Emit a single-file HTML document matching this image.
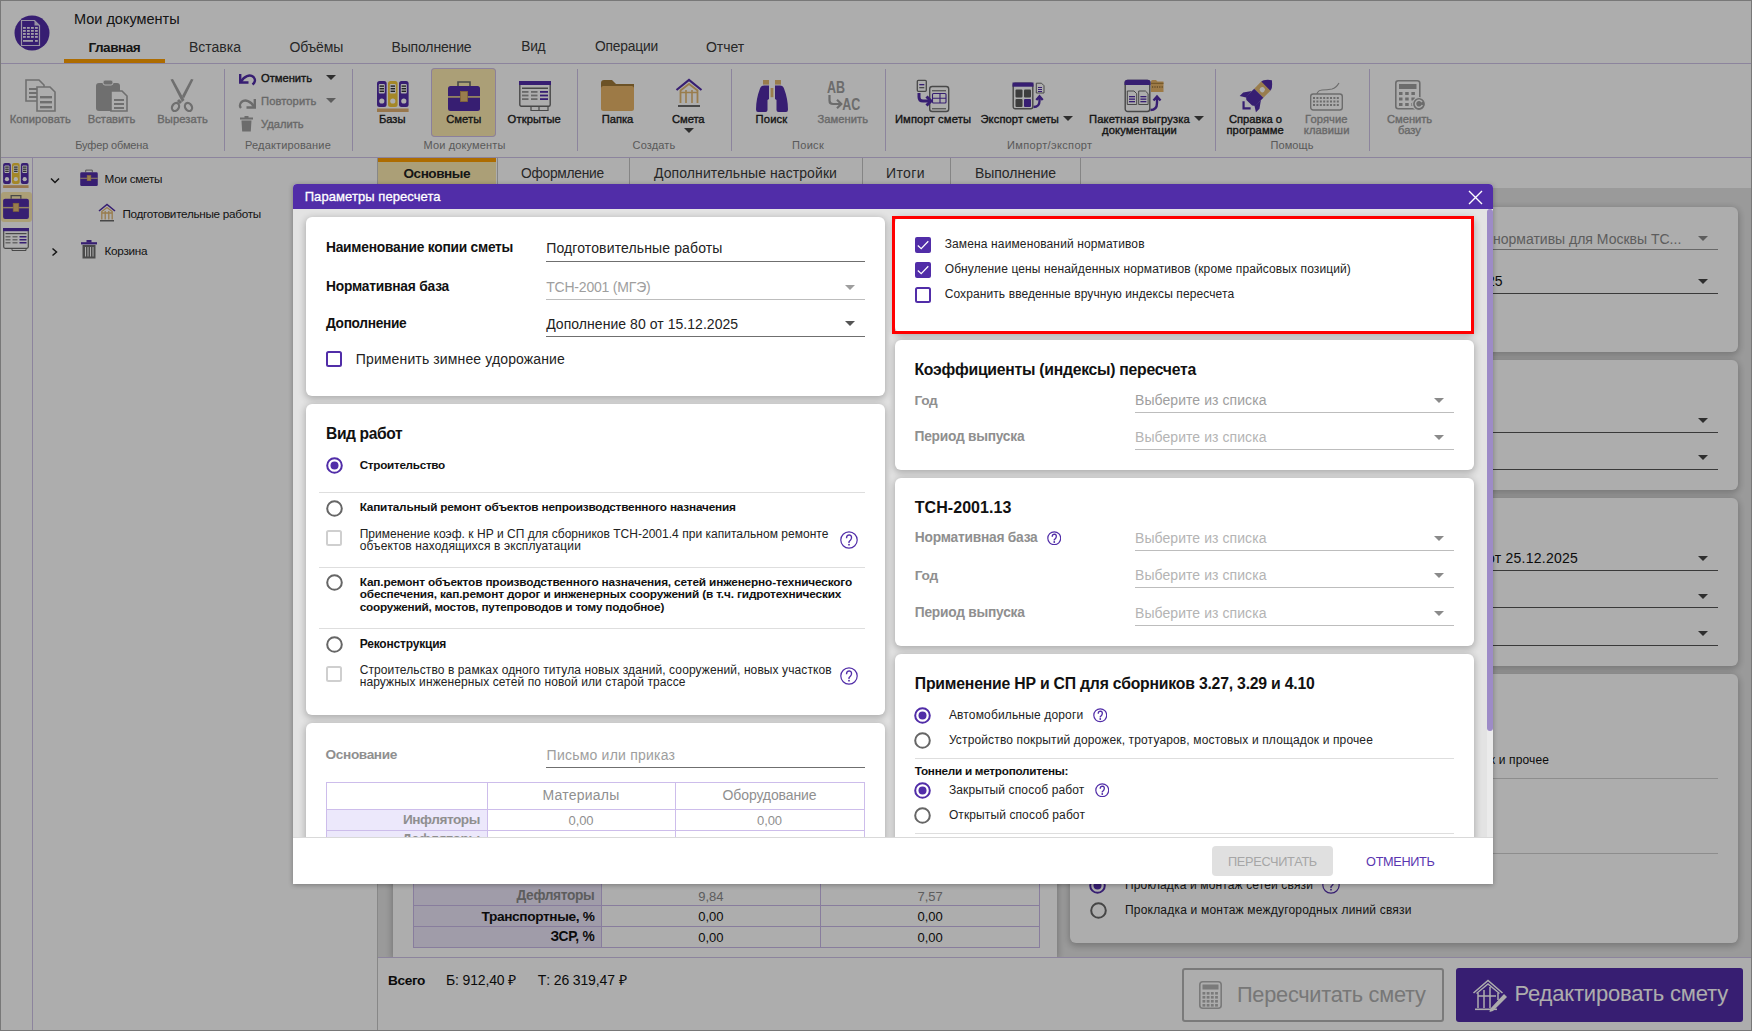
<!DOCTYPE html>
<html><head><meta charset='utf-8'><style>
html,body{margin:0;padding:0;width:1752px;height:1031px;overflow:hidden;background:#fff;font-family:"Liberation Sans",sans-serif;color:#212121}
.r{position:absolute;display:block;box-sizing:border-box}
.t{position:absolute;white-space:pre;line-height:1}
</style></head><body>
<svg class="r" style="left:14px;top:15px;" width="36" height="36" viewBox="0 0 36 36"><circle cx="18" cy="18" r="17.5" fill="#512da8"/><path d="M7.5 5.5 h13 l5 5 v20 h-18 z" fill="none" stroke="#e0d8f0" stroke-width="1.2"/><path d="M20.5 5.5 v5 h5" fill="#e0d8f0"/><rect x="9" y="12" width="2.8" height="1.8" fill="#f0ecf8"/><rect x="13" y="12" width="2.8" height="1.8" fill="#f0ecf8"/><rect x="17" y="12" width="2.8" height="1.8" fill="#f0ecf8"/><rect x="21" y="12" width="2.8" height="1.8" fill="#f0ecf8"/><rect x="9" y="15" width="2.8" height="1.8" fill="#f0ecf8"/><rect x="13" y="15" width="2.8" height="1.8" fill="#f0ecf8"/><rect x="17" y="15" width="2.8" height="1.8" fill="#f0ecf8"/><rect x="21" y="15" width="2.8" height="1.8" fill="#f0ecf8"/><rect x="9" y="18" width="2.8" height="1.8" fill="#f0ecf8"/><rect x="13" y="18" width="2.8" height="1.8" fill="#f0ecf8"/><rect x="17" y="18" width="2.8" height="1.8" fill="#f0ecf8"/><rect x="21" y="18" width="2.8" height="1.8" fill="#f0ecf8"/><rect x="9" y="21" width="2.8" height="1.8" fill="#f0ecf8"/><rect x="13" y="21" width="2.8" height="1.8" fill="#f0ecf8"/><rect x="17" y="21" width="2.8" height="1.8" fill="#f0ecf8"/><rect x="21" y="21" width="2.8" height="1.8" fill="#f0ecf8"/><rect x="9" y="25" width="10" height="1.8" fill="#f0ecf8"/><rect x="21" y="25" width="2.8" height="1.8" fill="#f0ecf8"/></svg>
<div class="t" style="left:74.0px;top:11.53px;font-size:14.5px;letter-spacing:-0.004px;">Мои документы</div>
<div class="t" style="left:88.4px;top:40.52px;font-size:13.56px;font-weight:700;letter-spacing:-0.451px;">Главная</div>
<div class="t" style="left:189.0px;top:40.15px;font-size:14px;color:#3a3a3a;letter-spacing:-0.007px;">Вставка</div>
<div class="t" style="left:289.5px;top:40.15px;font-size:14px;color:#3a3a3a;letter-spacing:-0.195px;">Объёмы</div>
<div class="t" style="left:391.5px;top:40.15px;font-size:14px;color:#3a3a3a;letter-spacing:-0.148px;">Выполнение</div>
<div class="t" style="left:521.3px;top:40.37px;font-size:13.74px;color:#3a3a3a;letter-spacing:-0.285px;">Вид</div>
<div class="t" style="left:595.0px;top:40.31px;font-size:13.81px;color:#3a3a3a;letter-spacing:-0.202px;">Операции</div>
<div class="t" style="left:706.0px;top:40.15px;font-size:14px;color:#3a3a3a;letter-spacing:-0.069px;">Отчет</div>
<div class="r" style="left:64px;top:59px;width:101px;height:4px;background:#ffa000;"></div>
<div class="r" style="left:0px;top:63px;width:1752px;height:1px;background:#cfc3e8;"></div>
<div class="r" style="left:224px;top:69px;width:1px;height:82px;background:#cfc3e8;"></div>
<div class="r" style="left:352px;top:69px;width:1px;height:82px;background:#cfc3e8;"></div>
<div class="r" style="left:577px;top:69px;width:1px;height:82px;background:#cfc3e8;"></div>
<div class="r" style="left:731px;top:69px;width:1px;height:82px;background:#cfc3e8;"></div>
<div class="r" style="left:885px;top:69px;width:1px;height:82px;background:#cfc3e8;"></div>
<div class="r" style="left:1215px;top:69px;width:1px;height:82px;background:#cfc3e8;"></div>
<div class="r" style="left:1369px;top:69px;width:1px;height:82px;background:#cfc3e8;"></div>
<div class="r" style="left:0px;top:157px;width:1752px;height:1px;background:#cfc3e8;"></div>
<div class="t" style="left:75.3px;top:140.49px;font-size:11px;color:#858585;letter-spacing:-0.154px;">Буфер обмена</div>
<div class="t" style="left:245.1px;top:140.49px;font-size:11px;color:#858585;letter-spacing:0.143px;">Редактирование</div>
<div class="t" style="left:423.6px;top:140.49px;font-size:11px;color:#858585;letter-spacing:0.134px;">Мои документы</div>
<div class="t" style="left:632.6px;top:140.49px;font-size:11px;color:#858585;letter-spacing:0.141px;">Создать</div>
<div class="t" style="left:792.0px;top:140.49px;font-size:11px;color:#858585;letter-spacing:0.303px;">Поиск</div>
<div class="t" style="left:1007.0px;top:140.49px;font-size:11px;color:#858585;letter-spacing:0.353px;">Импорт/экспорт</div>
<div class="t" style="left:1270.5px;top:140.49px;font-size:11px;color:#858585;letter-spacing:0.083px;">Помощь</div>
<div class="t" style="left:9.7px;top:114.02px;font-size:11.2px;color:#9a9a9a;letter-spacing:0.095px;-webkit-text-stroke:0.35px currentColor;">Копировать</div>
<div class="t" style="left:87.8px;top:114.02px;font-size:11.2px;color:#9a9a9a;letter-spacing:0.01px;-webkit-text-stroke:0.35px currentColor;">Вставить</div>
<div class="t" style="left:157.2px;top:114.02px;font-size:11.2px;color:#9a9a9a;letter-spacing:0.117px;-webkit-text-stroke:0.35px currentColor;">Вырезать</div>
<div class="r" style="left:431px;top:68px;width:65px;height:69px;background:#fdebb0;border-radius:4px;box-shadow:inset 0 0 0 1px #cdbde6;"></div>
<div class="t" style="left:378.9px;top:114.02px;font-size:11.2px;letter-spacing:0.023px;-webkit-text-stroke:0.35px currentColor;">Базы</div>
<div class="t" style="left:446.2px;top:114.02px;font-size:11.2px;letter-spacing:0.081px;-webkit-text-stroke:0.35px currentColor;">Сметы</div>
<div class="t" style="left:507.6px;top:114.02px;font-size:11.2px;letter-spacing:0.116px;-webkit-text-stroke:0.35px currentColor;">Открытые</div>
<div class="t" style="left:601.8px;top:114.02px;font-size:11.2px;letter-spacing:-0.058px;-webkit-text-stroke:0.35px currentColor;">Папка</div>
<div class="t" style="left:672.0px;top:114.02px;font-size:11.2px;letter-spacing:-0.069px;-webkit-text-stroke:0.35px currentColor;">Смета</div>
<div class="t" style="left:755.6px;top:114.02px;font-size:11.2px;letter-spacing:0.157px;-webkit-text-stroke:0.35px currentColor;">Поиск</div>
<div class="t" style="left:817.4px;top:114.02px;font-size:11.2px;color:#9a9a9a;letter-spacing:0.052px;-webkit-text-stroke:0.35px currentColor;">Заменить</div>
<div class="t" style="left:894.9px;top:114.02px;font-size:11.2px;letter-spacing:0.139px;-webkit-text-stroke:0.35px currentColor;">Импорт сметы</div>
<div class="t" style="left:980.5px;top:114.02px;font-size:11.2px;letter-spacing:0.081px;-webkit-text-stroke:0.35px currentColor;">Экспорт сметы</div>
<div class="t" style="left:1089.0px;top:114.02px;font-size:11.2px;letter-spacing:0.172px;-webkit-text-stroke:0.35px currentColor;">Пакетная выгрузка</div>
<div class="t" style="left:1102.0px;top:124.72px;font-size:11.2px;letter-spacing:0.128px;-webkit-text-stroke:0.35px currentColor;">документации</div>
<div class="t" style="left:1229.0px;top:114.02px;font-size:11.2px;letter-spacing:-0.024px;-webkit-text-stroke:0.35px currentColor;">Справка о</div>
<div class="t" style="left:1226.5px;top:124.72px;font-size:11.2px;letter-spacing:0.062px;-webkit-text-stroke:0.35px currentColor;">программе</div>
<div class="t" style="left:1305.0px;top:114.02px;font-size:11.2px;color:#9a9a9a;letter-spacing:0.1px;-webkit-text-stroke:0.35px currentColor;">Горячие</div>
<div class="t" style="left:1303.8px;top:124.72px;font-size:11.2px;color:#9a9a9a;letter-spacing:0.073px;-webkit-text-stroke:0.35px currentColor;">клавиши</div>
<div class="t" style="left:1387.0px;top:114.02px;font-size:11.2px;color:#9a9a9a;letter-spacing:-0.039px;-webkit-text-stroke:0.35px currentColor;">Сменить</div>
<div class="t" style="left:1398.0px;top:124.72px;font-size:11.2px;color:#9a9a9a;letter-spacing:0.035px;-webkit-text-stroke:0.35px currentColor;">базу</div>
<svg class="r" style="left:684px;top:128px;" width="10" height="5" viewBox="0 0 10 5"><path d="M0 0 H10 L5.0 5 Z" fill="#444"/></svg>
<svg class="r" style="left:1063px;top:115.5px;" width="10" height="5" viewBox="0 0 10 5"><path d="M0 0 H10 L5.0 5 Z" fill="#444"/></svg>
<svg class="r" style="left:1193.5px;top:115.5px;" width="10" height="5" viewBox="0 0 10 5"><path d="M0 0 H10 L5.0 5 Z" fill="#444"/></svg>
<svg class="r" style="left:326px;top:75px;" width="10" height="5" viewBox="0 0 10 5"><path d="M0 0 H10 L5.0 5 Z" fill="#444"/></svg>
<svg class="r" style="left:326px;top:98px;" width="10" height="5" viewBox="0 0 10 5"><path d="M0 0 H10 L5.0 5 Z" fill="#8a8a8a"/></svg>
<div class="t" style="left:261.0px;top:72.82px;font-size:11.2px;letter-spacing:-0.016px;-webkit-text-stroke:0.35px currentColor;">Отменить</div>
<div class="t" style="left:261.0px;top:95.82px;font-size:11.2px;color:#9a9a9a;letter-spacing:0.088px;-webkit-text-stroke:0.35px currentColor;">Повторить</div>
<div class="t" style="left:261.0px;top:118.72px;font-size:11.2px;color:#9a9a9a;letter-spacing:-0.003px;-webkit-text-stroke:0.35px currentColor;">Удалить</div>
<svg class="r" style="left:238px;top:71px;" width="19" height="15" viewBox="0 0 19 15"><path d="M2.2 3 V11.5 H10.5" fill="none" stroke="#512da8" stroke-width="2.4"/><path d="M3 10.8 C6 5 12 3 15.5 6 C18 8.5 17 11.5 14.5 13.5" fill="none" stroke="#512da8" stroke-width="2.4"/></svg>
<svg class="r" style="left:238px;top:94px;" width="19" height="15" viewBox="0 0 19 15"><path d="M16.8 5 V13.5 H8.5" fill="none" stroke="#a0a0a0" stroke-width="2.4"/><path d="M16 12.8 C13 7 7 5 3.5 8 C1 10.5 2 13 3 14" fill="none" stroke="#a0a0a0" stroke-width="2.4"/></svg>
<svg class="r" style="left:240px;top:116px;" width="13" height="16" viewBox="0 0 13 16"><rect x="0" y="1.5" width="13" height="2" fill="#a0a0a0"/><rect x="4.5" y="0" width="4" height="2" fill="#a0a0a0"/><path d="M1.5 4.5 H11.5 L10.8 15.5 H2.2 Z" fill="#a0a0a0"/></svg>
<svg class="r" style="left:25px;top:79px;" width="32" height="33" viewBox="0 0 32 33"><path d="M1 1 H14 L19 6 V22 H1 Z" fill="#fff" stroke="#a4a4a4" stroke-width="1.6"/><rect x="4" y="9" width="10" height="2" fill="#a4a4a4"/><rect x="4" y="13" width="10" height="2" fill="#a4a4a4"/><rect x="4" y="17" width="8" height="2" fill="#a4a4a4"/><path d="M12 8 H25 L30 13 V32 H12 Z" fill="#fff" stroke="#a4a4a4" stroke-width="1.6"/><rect x="15" y="17" width="12" height="2.4" fill="#a4a4a4"/><rect x="15" y="22" width="12" height="2.4" fill="#a4a4a4"/><rect x="15" y="27" width="12" height="2.4" fill="#a4a4a4"/></svg>
<svg class="r" style="left:95px;top:79px;" width="33" height="33" viewBox="0 0 33 33"><rect x="1" y="4" width="24" height="28" rx="3" fill="#a4a4a4"/><rect x="8" y="1" width="10" height="5" rx="2" fill="#a4a4a4" stroke="#fff" stroke-width="1"/><path d="M16 12 H27 L32 17 V32 H16 Z" fill="#fff" stroke="#a4a4a4" stroke-width="1.6"/><rect x="19" y="20" width="10" height="2" fill="#a4a4a4"/><rect x="19" y="24" width="10" height="2" fill="#a4a4a4"/><rect x="19" y="28" width="10" height="2" fill="#a4a4a4"/></svg>
<svg class="r" style="left:169px;top:79px;" width="26" height="33" viewBox="0 0 26 33"><path d="M1.5 0.5 L4 0 L15.5 21 L13 23 Z" fill="#a4a4a4"/><path d="M24.5 0.5 L22 0 L13 17 L15 19.5 Z" fill="#a4a4a4"/><path d="M9 21 L12 24" stroke="#a4a4a4" stroke-width="3"/><ellipse cx="6.5" cy="28" rx="3.3" ry="4.3" fill="none" stroke="#a4a4a4" stroke-width="2.2" transform="rotate(30 6.5 28)"/><ellipse cx="19.5" cy="28" rx="3.3" ry="4.3" fill="none" stroke="#a4a4a4" stroke-width="2.2" transform="rotate(-30 19.5 28)"/></svg>
<svg class="r" style="left:377px;top:81px;" width="32" height="31" viewBox="0 0 32 31"><rect x="0" y="0" width="9.6" height="26" rx="2.5" fill="#512da8"/><rect x="1.8" y="3" width="6" height="9.5" rx="1" fill="#fff"/><rect x="2.6" y="4.4" width="4.4" height="1.4" fill="#333"/><rect x="2.6" y="7.0" width="4.4" height="1.4" fill="#333"/><rect x="2.6" y="9.600000000000001" width="4.4" height="1.4" fill="#333"/><circle cx="4.8" cy="20" r="2.6" fill="#fff"/><rect x="11" y="0" width="9.6" height="26" rx="2.5" fill="#f2c83a"/><rect x="12.8" y="3" width="6" height="9.5" rx="1" fill="#fff"/><rect x="13.6" y="4.4" width="4.4" height="1.4" fill="#333"/><rect x="13.6" y="7.0" width="4.4" height="1.4" fill="#333"/><rect x="13.6" y="9.600000000000001" width="4.4" height="1.4" fill="#333"/><circle cx="15.8" cy="20" r="2.6" fill="#fff"/><rect x="22" y="0" width="9.6" height="26" rx="2.5" fill="#512da8"/><rect x="23.8" y="3" width="6" height="9.5" rx="1" fill="#fff"/><rect x="24.6" y="4.4" width="4.4" height="1.4" fill="#333"/><rect x="24.6" y="7.0" width="4.4" height="1.4" fill="#333"/><rect x="24.6" y="9.600000000000001" width="4.4" height="1.4" fill="#333"/><circle cx="26.8" cy="20" r="2.6" fill="#fff"/><rect x="0" y="27.5" width="31.6" height="3.5" fill="#e0b070"/></svg>
<svg class="r" style="left:448px;top:80px;" width="32" height="31" viewBox="0 0 32 31"><path d="M10 6 V2 H22 V6" fill="none" stroke="#6a6a6a" stroke-width="1.6"/><rect x="0" y="6" width="32" height="25" rx="2.5" fill="#512da8"/><rect x="0" y="16" width="32" height="1.8" fill="#d8c090"/><rect x="12.5" y="11.5" width="7" height="10" fill="#e2b872" stroke="#c49a50" stroke-width="0.8"/></svg>
<svg class="r" style="left:519px;top:81px;" width="32" height="31" viewBox="0 0 32 31"><rect x="0.8" y="0.8" width="30.4" height="24.4" rx="1.5" fill="#fff" stroke="#6a6a6a" stroke-width="1.4"/><rect x="0" y="0" width="32" height="4" fill="#512da8"/><rect x="3" y="6.5" width="26" height="1.5" fill="#6a6a6a"/><rect x="3" y="10.0" width="6.5" height="1.8" fill="#9a9a9a"/><rect x="12" y="10.0" width="6.5" height="1.8" fill="#9a9a9a"/><rect x="21" y="10.0" width="8" height="1.8" fill="#512da8"/><rect x="3" y="13.6" width="6.5" height="1.8" fill="#9a9a9a"/><rect x="12" y="13.6" width="6.5" height="1.8" fill="#9a9a9a"/><rect x="21" y="13.6" width="8" height="1.8" fill="#512da8"/><rect x="3" y="17.2" width="6.5" height="1.8" fill="#9a9a9a"/><rect x="12" y="17.2" width="6.5" height="1.8" fill="#9a9a9a"/><rect x="21" y="17.2" width="8" height="1.8" fill="#512da8"/><path d="M12 25.5 V29.5 H29 V25.5" fill="none" stroke="#6a6a6a" stroke-width="1.2"/><path d="M20 25.5 V29.5" stroke="#6a6a6a" stroke-width="1.2"/></svg>
<svg class="r" style="left:601px;top:80px;" width="33" height="31" viewBox="0 0 33 31"><path d="M0 3 Q0 0 3 0 H11 L15 4 H33 V9 H0 Z" fill="#a07a38"/><rect x="0" y="6" width="33" height="25" rx="2.5" fill="#e8b468"/></svg>
<svg class="r" style="left:675px;top:78px;" width="28" height="32" viewBox="0 0 28 32"><path d="M1.5 12 L14 2 L26.5 12" fill="none" stroke="#512da8" stroke-width="2.2"/><path d="M5.5 25 V12.5 L14 6 L22.5 12.5 V25" fill="none" stroke="#e2b872" stroke-width="1.8"/><path d="M5.5 14.5 H22.5 M11 12 V25 M17 12 V25" stroke="#e2b872" stroke-width="1.6"/><rect x="3" y="27" width="22" height="2" fill="#6a6a6a"/></svg>
<svg class="r" style="left:755px;top:79px;" width="34" height="34" viewBox="0 0 34 34"><rect x="8" y="1" width="6" height="4.6" fill="#e2b872"/><rect x="20" y="1" width="6" height="4.6" fill="#e2b872"/><path d="M9 6.5 H14 V20 L12.5 21 V31 Q12.5 33 10.5 33 H3 Q1 33 1 30.5 Q1 20 5 9.5 Q6 6.5 9 6.5 Z" fill="#512da8"/><path d="M25 6.5 H20 V20 L21.5 21 V31 Q21.5 33 23.5 33 H31 Q33 33 33 30.5 Q33 20 29 9.5 Q28 6.5 25 6.5 Z" fill="#512da8"/><rect x="15.6" y="9" width="2.8" height="9.2" fill="#e2b872"/></svg>
<svg class="r" style="left:825px;top:79px;" width="36" height="33" viewBox="0 0 36 33"><g transform="scale(0.78 1)"><text x="2.5" y="13.8" font-family="Liberation Sans" font-weight="700" font-size="16" fill="#a0a0a0">AB</text><text x="22" y="30.8" font-family="Liberation Sans" font-weight="700" font-size="16" fill="#a0a0a0">AC</text></g><path d="M4.5 16 V21.5 Q4.5 25 8 25 H15.5 M12 20.8 L16.3 25 L12 29.2" fill="none" stroke="#a0a0a0" stroke-width="2.2"/></svg>
<svg class="r" style="left:916px;top:79px;" width="34" height="34" viewBox="0 0 34 34"><rect x="1.3" y="1.3" width="9" height="11" rx="1" fill="#fff" stroke="#6a6a6a" stroke-width="1.3"/><rect x="3.3" y="5" width="5" height="1.3" fill="#512da8"/><rect x="3.3" y="8" width="5" height="1.3" fill="#6a6a6a"/><rect x="13.7" y="7.5" width="19" height="25" rx="2.5" fill="#fff" stroke="#6a6a6a" stroke-width="1.4"/><rect x="16" y="11" width="14" height="1.4" fill="#8a8a8a"/><rect x="16" y="29" width="14" height="1.4" fill="#8a8a8a"/><rect x="16.5" y="14.5" width="13.5" height="9.5" rx="1" fill="none" stroke="#512da8" stroke-width="1.1"/><path d="M16.5 19.2 H30 M24 14.5 V24" stroke="#512da8" stroke-width="1.1"/><path d="M3 14 V18 Q3 22 7 22 H14" fill="none" stroke="#512da8" stroke-width="3"/><path d="M10.5 17.5 L15 22 L10.5 26.5" fill="none" stroke="#512da8" stroke-width="3"/></svg>
<svg class="r" style="left:1012px;top:82px;" width="34" height="28" viewBox="0 0 34 28"><rect x="1.2" y="1.2" width="19.6" height="25.6" rx="2" fill="#fff" stroke="#6a6a6a" stroke-width="1.4"/><rect x="0.5" y="0.5" width="21" height="4.2" fill="#512da8"/><rect x="3.5" y="7.5" width="7" height="8" rx="1" fill="#5a5a5a"/><rect x="12" y="7.5" width="7" height="8" rx="1" fill="#5a5a5a"/><rect x="3.5" y="17" width="7" height="8" rx="1" fill="#5a5a5a"/><rect x="12" y="17" width="7" height="8" rx="1" fill="#512da8"/><path d="M24.3 1.2 H29.5 L32 3.7 V11 H24.3 Z" fill="#fff" stroke="#6a6a6a" stroke-width="1"/><rect x="26" y="5" width="4" height="1" fill="#512da8"/><rect x="26" y="7" width="4" height="1" fill="#512da8"/><rect x="26" y="9" width="4" height="1" fill="#512da8"/><path d="M21.5 25 Q27.5 25 27.5 19 V15 M24.3 18 L27.5 14.2 L30.7 18" fill="none" stroke="#512da8" stroke-width="2.3"/></svg>
<svg class="r" style="left:1124px;top:79px;" width="41" height="34" viewBox="0 0 41 34"><rect x="1.2" y="1.5" width="24.6" height="31" rx="2.5" fill="#fff" stroke="#6a6a6a" stroke-width="1.4"/><path d="M0.5 6 V3.5 Q0.5 0.8 3.5 0.8 H23.5 Q26.5 0.8 26.5 3.5 V6 Z" fill="#512da8"/><path d="M3.3 12 H10 L12.7 14.7 V25.5 H3.3 Z" fill="#fff" stroke="#6a6a6a" stroke-width="1"/><path d="M14.7 12 H21.4 L24.1 14.7 V25.5 H14.7 Z" fill="#fff" stroke="#6a6a6a" stroke-width="1"/><rect x="5" y="17" width="6" height="1.3" fill="#512da8"/><rect x="5" y="19.5" width="6" height="1.3" fill="#512da8"/><rect x="5" y="22" width="6" height="1.3" fill="#512da8"/><rect x="16.4" y="17" width="6" height="1.3" fill="#512da8"/><rect x="16.4" y="19.5" width="6" height="1.3" fill="#512da8"/><rect x="16.4" y="22" width="6" height="1.3" fill="#512da8"/><path d="M27 2.5 Q27 1 28.5 1 H32 L33.5 2.5 H39.5 V13 H27 Z" fill="#e8b468"/><rect x="27" y="3.8" width="12.5" height="1" fill="#a07a38"/><path d="M28 8 H39" stroke="#6a5020" stroke-width="1" stroke-dasharray="1.2 1.2"/><path d="M26.5 31 Q33 31 33 24 V18.5 M29.5 21.5 L33 17.5 L36.5 21.5" fill="none" stroke="#512da8" stroke-width="2.4"/></svg>
<svg class="r" style="left:1238px;top:78px;" width="36" height="36" viewBox="0 0 36 36"><g transform="translate(19 17) rotate(45)"><path d="M0 -21 Q6.5 -16 6.5 -12 H-6.5 Q-6.5 -16 0 -21 Z" fill="#512da8"/><rect x="-6.5" y="-12.5" width="13" height="10" fill="#e2b872"/><circle cx="0" cy="-7.5" r="2.6" fill="#fff"/><path d="M-6.5 -2.5 H6.5 V9 L4 11 H-4 L-6.5 9 Z" fill="#512da8"/><path d="M-6.5 1 L-11.5 8 V13 L-6 9.5 Z M6.5 1 L11.5 8 V13 L6 9.5 Z" fill="#512da8"/><path d="M-5 14 L0 19 L5 14" fill="none" stroke="#512da8" stroke-width="2.2"/></g></svg>
<svg class="r" style="left:1310px;top:80px;" width="33" height="32" viewBox="0 0 33 32"><path d="M6 20 Q6 10 12 10 Q17 10 22 9 Q26 8 29 3" fill="none" stroke="#a0a0a0" stroke-width="1.2"/><rect x="0.7" y="14" width="31.6" height="16" rx="2.5" fill="#fff" stroke="#a0a0a0" stroke-width="1.4"/><rect x="3.0" y="17.0" width="2" height="2" fill="#a0a0a0"/><rect x="3.0" y="20.5" width="2" height="2" fill="#a0a0a0"/><rect x="3.0" y="24.0" width="2" height="2" fill="#a0a0a0"/><rect x="6.4" y="17.0" width="2" height="2" fill="#a0a0a0"/><rect x="6.4" y="20.5" width="2" height="2" fill="#a0a0a0"/><rect x="6.4" y="24.0" width="2" height="2" fill="#a0a0a0"/><rect x="9.8" y="17.0" width="2" height="2" fill="#a0a0a0"/><rect x="9.8" y="20.5" width="2" height="2" fill="#a0a0a0"/><rect x="9.8" y="24.0" width="2" height="2" fill="#a0a0a0"/><rect x="13.2" y="17.0" width="2" height="2" fill="#a0a0a0"/><rect x="13.2" y="20.5" width="2" height="2" fill="#a0a0a0"/><rect x="13.2" y="24.0" width="2" height="2" fill="#a0a0a0"/><rect x="16.6" y="17.0" width="2" height="2" fill="#a0a0a0"/><rect x="16.6" y="20.5" width="2" height="2" fill="#a0a0a0"/><rect x="16.6" y="24.0" width="2" height="2" fill="#a0a0a0"/><rect x="20.0" y="17.0" width="2" height="2" fill="#a0a0a0"/><rect x="20.0" y="20.5" width="2" height="2" fill="#a0a0a0"/><rect x="20.0" y="24.0" width="2" height="2" fill="#a0a0a0"/><rect x="23.4" y="17.0" width="2" height="2" fill="#a0a0a0"/><rect x="23.4" y="20.5" width="2" height="2" fill="#a0a0a0"/><rect x="23.4" y="24.0" width="2" height="2" fill="#a0a0a0"/><rect x="26.8" y="17.0" width="2" height="2" fill="#a0a0a0"/><rect x="26.8" y="20.5" width="2" height="2" fill="#a0a0a0"/><rect x="26.8" y="24.0" width="2" height="2" fill="#a0a0a0"/></svg>
<svg class="r" style="left:1395px;top:80px;" width="31" height="32" viewBox="0 0 31 32"><rect x="0.8" y="0.8" width="24" height="28" rx="2.5" fill="#fff" stroke="#a0a0a0" stroke-width="1.6"/><rect x="4" y="4" width="17.5" height="5" fill="#a0a0a0"/><rect x="4.0" y="12.0" width="3.5" height="3" fill="#a0a0a0"/><rect x="4.0" y="17.5" width="3.5" height="3" fill="#a0a0a0"/><rect x="4.0" y="23.0" width="3.5" height="3" fill="#a0a0a0"/><rect x="10.2" y="12.0" width="3.5" height="3" fill="#a0a0a0"/><rect x="10.2" y="17.5" width="3.5" height="3" fill="#a0a0a0"/><rect x="10.2" y="23.0" width="3.5" height="3" fill="#a0a0a0"/><rect x="16.4" y="12.0" width="3.5" height="3" fill="#a0a0a0"/><rect x="16.4" y="17.5" width="3.5" height="3" fill="#a0a0a0"/><rect x="16.4" y="23.0" width="3.5" height="3" fill="#a0a0a0"/><circle cx="24" cy="24" r="6.5" fill="#a0a0a0" stroke="#fff" stroke-width="1.2"/><path d="M27 22 A3.5 3.5 0 1 0 27.3 25" fill="none" stroke="#fff" stroke-width="1.5"/></svg>
<div class="r" style="left:32px;top:158px;width:1px;height:873px;background:#cfc3e8;"></div>
<svg class="r" style="left:3px;top:163px;" width="26" height="25" viewBox="0 0 32 31"><rect x="0" y="0" width="9.6" height="26" rx="2.5" fill="#512da8"/><rect x="1.8" y="3" width="6" height="9.5" rx="1" fill="#fff"/><rect x="2.6" y="4.4" width="4.4" height="1.4" fill="#333"/><rect x="2.6" y="7.0" width="4.4" height="1.4" fill="#333"/><rect x="2.6" y="9.600000000000001" width="4.4" height="1.4" fill="#333"/><circle cx="4.8" cy="20" r="2.6" fill="#fff"/><rect x="11" y="0" width="9.6" height="26" rx="2.5" fill="#f2c83a"/><rect x="12.8" y="3" width="6" height="9.5" rx="1" fill="#fff"/><rect x="13.6" y="4.4" width="4.4" height="1.4" fill="#333"/><rect x="13.6" y="7.0" width="4.4" height="1.4" fill="#333"/><rect x="13.6" y="9.600000000000001" width="4.4" height="1.4" fill="#333"/><circle cx="15.8" cy="20" r="2.6" fill="#fff"/><rect x="22" y="0" width="9.6" height="26" rx="2.5" fill="#512da8"/><rect x="23.8" y="3" width="6" height="9.5" rx="1" fill="#fff"/><rect x="24.6" y="4.4" width="4.4" height="1.4" fill="#333"/><rect x="24.6" y="7.0" width="4.4" height="1.4" fill="#333"/><rect x="24.6" y="9.600000000000001" width="4.4" height="1.4" fill="#333"/><circle cx="26.8" cy="20" r="2.6" fill="#fff"/><rect x="0" y="27.5" width="31.6" height="3.5" fill="#e0b070"/></svg>
<div class="r" style="left:1px;top:192px;width:31px;height:30px;background:#fdebb0;border-radius:3px;"></div>
<svg class="r" style="left:3px;top:194px;" width="26" height="25" viewBox="0 0 32 31"><path d="M10 6 V2 H22 V6" fill="none" stroke="#6a6a6a" stroke-width="1.6"/><rect x="0" y="6" width="32" height="25" rx="2.5" fill="#512da8"/><rect x="0" y="16" width="32" height="1.8" fill="#d8c090"/><rect x="12.5" y="11.5" width="7" height="10" fill="#e2b872" stroke="#c49a50" stroke-width="0.8"/></svg>
<svg class="r" style="left:3px;top:228px;" width="26" height="23" viewBox="0 0 26 23"><rect x="0.7" y="0.7" width="24.6" height="19.6" rx="1.5" fill="#fff" stroke="#6a6a6a" stroke-width="1.2"/><rect x="0" y="0" width="26" height="3.2" fill="#512da8"/><rect x="2.5" y="5" width="21" height="1.2" fill="#6a6a6a"/><rect x="2.5" y="8" width="5" height="1.5" fill="#9a9a9a"/><rect x="9.5" y="8" width="5" height="1.5" fill="#9a9a9a"/><rect x="16.5" y="8" width="7" height="1.5" fill="#512da8"/><rect x="2.5" y="11" width="5" height="1.5" fill="#9a9a9a"/><rect x="9.5" y="11" width="5" height="1.5" fill="#9a9a9a"/><rect x="16.5" y="11" width="7" height="1.5" fill="#512da8"/><rect x="2.5" y="14" width="5" height="1.5" fill="#9a9a9a"/><rect x="9.5" y="14" width="5" height="1.5" fill="#9a9a9a"/><rect x="16.5" y="14" width="7" height="1.5" fill="#512da8"/><path d="M9 20.5 V22.5 H23 V20.5" fill="none" stroke="#6a6a6a" stroke-width="1"/></svg>
<div class="r" style="left:377px;top:158px;width:1px;height:873px;background:#c8c8c8;"></div>
<svg class="r" style="left:50px;top:177px;" width="10" height="7" viewBox="0 0 10 7"><path d="M1 1.5 L5 5.5 L9 1.5" fill="none" stroke="#222" stroke-width="1.5"/></svg>
<svg class="r" style="left:80px;top:169px;" width="18" height="17" viewBox="0 0 32 31"><path d="M10 6 V2 H22 V6" fill="none" stroke="#6a6a6a" stroke-width="1.6"/><rect x="0" y="6" width="32" height="25" rx="2.5" fill="#512da8"/><rect x="0" y="16" width="32" height="1.8" fill="#d8c090"/><rect x="12.5" y="11.5" width="7" height="10" fill="#e2b872" stroke="#c49a50" stroke-width="0.8"/></svg>
<div class="t" style="left:104.5px;top:173.26px;font-size:11.74px;letter-spacing:-0.264px;">Мои сметы</div>
<svg class="r" style="left:98px;top:203px;" width="18" height="19" viewBox="0 0 18 19"><path d="M1 8 L9 1.5 L17 8" fill="none" stroke="#512da8" stroke-width="1.6"/><path d="M3.8 16.5 V8.5 L9 4.5 L14.2 8.5 V16.5 M3.8 10 H14.2 M7.2 8 V16.5 M10.8 8 V16.5" fill="none" stroke="#e2b872" stroke-width="1.3"/><rect x="2" y="17" width="14" height="1.5" fill="#6a6a6a"/></svg>
<div class="t" style="left:122.4px;top:208.39px;font-size:11.71px;letter-spacing:-0.279px;">Подготовительные работы</div>
<svg class="r" style="left:51px;top:247px;" width="7" height="10" viewBox="0 0 7 10"><path d="M1.5 1.5 L5.5 5 L1.5 8.5" fill="none" stroke="#222" stroke-width="1.5"/></svg>
<svg class="r" style="left:81px;top:240px;" width="16" height="19" viewBox="0 0 16 19"><rect x="0" y="2.2" width="16" height="2.2" fill="#512da8"/><rect x="5.5" y="0" width="5" height="2.5" fill="#512da8"/><path d="M1.5 5 H14.5 V18.5 H1.5 Z" fill="#6e6e6e"/><path d="M4.5 7 V16.5 M7 7 V16.5 M9.5 7 V16.5 M12 7 V16.5" stroke="#fff" stroke-width="1"/></svg>
<div class="t" style="left:104.5px;top:245.37px;font-size:11.73px;letter-spacing:-0.268px;">Корзина</div>
<div class="r" style="left:378px;top:158px;width:1374px;height:30px;background:#fff;"></div>
<div class="r" style="left:378px;top:158px;width:118px;height:4px;background:#ffa000;"></div>
<div class="r" style="left:378px;top:162px;width:118px;height:25px;background:#fdebb0;"></div>
<div class="t" style="left:403.5px;top:166.80px;font-size:13.58px;font-weight:700;letter-spacing:-0.48px;">Основные</div>
<div class="r" style="left:497px;top:158px;width:1px;height:30px;background:#c4c4c4;"></div>
<div class="r" style="left:629px;top:158px;width:1px;height:30px;background:#c4c4c4;"></div>
<div class="r" style="left:862px;top:158px;width:1px;height:30px;background:#c4c4c4;"></div>
<div class="r" style="left:950px;top:158px;width:1px;height:30px;background:#c4c4c4;"></div>
<div class="r" style="left:1080px;top:158px;width:1px;height:30px;background:#c4c4c4;"></div>
<div class="t" style="left:521.0px;top:166.64px;font-size:13.78px;color:#3a3a3a;letter-spacing:-0.252px;">Оформление</div>
<div class="t" style="left:654.0px;top:166.45px;font-size:14px;color:#3a3a3a;letter-spacing:0.084px;">Дополнительные настройки</div>
<div class="t" style="left:886.0px;top:166.45px;font-size:14px;color:#3a3a3a;letter-spacing:0.394px;">Итоги</div>
<div class="t" style="left:975.0px;top:166.45px;font-size:14px;color:#3a3a3a;letter-spacing:-0.048px;">Выполнение</div>
<div class="r" style="left:378px;top:188px;width:1374px;height:769px;background:#e4e4e4;"></div>
<div class="r" style="left:393px;top:207px;width:664px;height:750px;background:#fff;box-shadow:0 2px 7px 1px rgba(0,0,0,.24);"></div>
<div class="r" style="left:413px;top:870px;width:627px;height:78px;background:#fff;border:1px solid #c9b8e8;box-sizing:border-box;"></div>
<div class="r" style="left:414px;top:870px;width:187px;height:77px;background:#ece6fa;"></div>
<div class="r" style="left:413px;top:905px;width:626px;height:1px;background:#c9b8e8;"></div>
<div class="r" style="left:413px;top:926px;width:626px;height:1px;background:#c9b8e8;"></div>
<div class="r" style="left:601px;top:870px;width:1px;height:77px;background:#c9b8e8;"></div>
<div class="r" style="left:820px;top:870px;width:1px;height:77px;background:#c9b8e8;"></div>
<div class="t" style="left:516.5px;top:888.89px;font-size:13.72px;font-weight:700;color:#8a8a8a;letter-spacing:-0.332px;">Дефляторы</div>
<div class="t" style="left:481.5px;top:909.74px;font-size:13.66px;font-weight:700;color:#111;letter-spacing:-0.354px;">Транспортные, %</div>
<div class="t" style="left:550.5px;top:930.34px;font-size:13.77px;font-weight:700;color:#111;letter-spacing:-0.233px;">ЗСР, %</div>
<div class="t" style="left:698.3px;top:889.50px;font-size:13px;color:#8a8a8a;letter-spacing:-0.078px;">9,84</div>
<div class="t" style="left:698.3px;top:910.30px;font-size:13px;color:#111;letter-spacing:-0.078px;">0,00</div>
<div class="t" style="left:698.3px;top:931.00px;font-size:13px;color:#111;letter-spacing:-0.078px;">0,00</div>
<div class="t" style="left:917.6px;top:889.50px;font-size:13px;color:#8a8a8a;letter-spacing:-0.078px;">7,57</div>
<div class="t" style="left:917.6px;top:910.30px;font-size:13px;color:#111;letter-spacing:-0.078px;">0,00</div>
<div class="t" style="left:917.6px;top:931.00px;font-size:13px;color:#111;letter-spacing:-0.078px;">0,00</div>
<div class="r" style="left:1070px;top:207px;width:668px;height:145px;background:#fff;border-radius:6px;box-shadow:0 2px 7px 1px rgba(0,0,0,.24);"></div>
<div class="r" style="left:1070px;top:360px;width:668px;height:130px;background:#fff;border-radius:6px;box-shadow:0 2px 7px 1px rgba(0,0,0,.24);"></div>
<div class="r" style="left:1070px;top:498px;width:668px;height:168px;background:#fff;border-radius:6px;box-shadow:0 2px 7px 1px rgba(0,0,0,.24);"></div>
<div class="r" style="left:1070px;top:674px;width:668px;height:269px;background:#fff;border-radius:6px;box-shadow:0 2px 7px 1px rgba(0,0,0,.24);"></div>
<div class="t" style="left:1493.0px;top:231.55px;font-size:14px;color:#8a8a8a;">нормативы для Москвы ТС...</div>
<div class="r" style="left:1135px;top:249px;width:583px;height:1px;background:#9a9a9a;"></div>
<svg class="r" style="left:1698px;top:236px;" width="10" height="5" viewBox="0 0 10 5"><path d="M0 0 H10 L5.0 5 Z" fill="#8a8a8a"/></svg>
<div class="t" style="left:1471.5px;top:274.15px;font-size:14px;color:#111;letter-spacing:-0.039px;">2025</div>
<div class="r" style="left:1135px;top:293px;width:583px;height:1px;background:#555;"></div>
<svg class="r" style="left:1698px;top:279px;" width="10" height="5" viewBox="0 0 10 5"><path d="M0 0 H10 L5.0 5 Z" fill="#444"/></svg>
<div class="r" style="left:1135px;top:432px;width:583px;height:1px;background:#555;"></div>
<svg class="r" style="left:1698px;top:417.5px;" width="10" height="5" viewBox="0 0 10 5"><path d="M0 0 H10 L5.0 5 Z" fill="#444"/></svg>
<div class="r" style="left:1135px;top:469px;width:583px;height:1px;background:#555;"></div>
<svg class="r" style="left:1698px;top:454.5px;" width="10" height="5" viewBox="0 0 10 5"><path d="M0 0 H10 L5.0 5 Z" fill="#444"/></svg>
<div class="t" style="left:1487.0px;top:551.15px;font-size:14px;color:#111;letter-spacing:0.242px;">от 25.12.2025</div>
<div class="r" style="left:1135px;top:570px;width:583px;height:1px;background:#555;"></div>
<svg class="r" style="left:1698px;top:555.5px;" width="10" height="5" viewBox="0 0 10 5"><path d="M0 0 H10 L5.0 5 Z" fill="#444"/></svg>
<div class="r" style="left:1135px;top:607px;width:583px;height:1px;background:#555;"></div>
<svg class="r" style="left:1698px;top:594px;" width="10" height="5" viewBox="0 0 10 5"><path d="M0 0 H10 L5.0 5 Z" fill="#444"/></svg>
<div class="r" style="left:1135px;top:645px;width:583px;height:1px;background:#555;"></div>
<svg class="r" style="left:1698px;top:630.5px;" width="10" height="5" viewBox="0 0 10 5"><path d="M0 0 H10 L5.0 5 Z" fill="#444"/></svg>
<div class="t" style="left:1125.0px;top:753.84px;font-size:12px;color:#111;letter-spacing:0.143px;">Устройство покрытий дорожек, тротуаров, мостовых и площадок и прочее</div>
<div class="r" style="left:1090px;top:778px;width:628px;height:1px;background:#d0d0d0;"></div>
<div class="r" style="left:1090px;top:853px;width:628px;height:1px;background:#d0d0d0;"></div>
<svg class="r" style="left:1089px;top:877px;" width="17" height="17" viewBox="0 0 17 17"><circle cx="8.5" cy="8.5" r="7.3" fill="none" stroke="#512da8" stroke-width="2"/><circle cx="8.5" cy="8.5" r="4" fill="#512da8"/></svg>
<div class="t" style="left:1125.0px;top:878.84px;font-size:12px;letter-spacing:0.139px;">Прокладка и монтаж сетей связи</div>
<svg class="r" style="left:1322px;top:876px;" width="18" height="18" viewBox="0 0 18 18"><circle cx="9" cy="9" r="8.2" fill="none" stroke="#512da8" stroke-width="1.2"/><path d="M6.5 7.2 Q6.5 4 9.4 4 Q12 4.3 11.5 7.2 Q11.2 9 9 10.8 V12" fill="none" stroke="#512da8" stroke-width="1.3"/><circle cx="9" cy="13.7" r="0.9" fill="#512da8"/></svg>
<svg class="r" style="left:1090px;top:902px;" width="17" height="17" viewBox="0 0 17 17"><circle cx="8.5" cy="8.5" r="7.3" fill="none" stroke="#666" stroke-width="2"/></svg>
<div class="t" style="left:1125.0px;top:904.04px;font-size:12px;letter-spacing:0.201px;">Прокладка и монтаж междугородных линий связи</div>
<div class="r" style="left:378px;top:957px;width:1374px;height:74px;background:#fff;"></div>
<div class="r" style="left:378px;top:957px;width:1374px;height:1px;background:#cfc3e8;"></div>
<div class="t" style="left:388.0px;top:973.65px;font-size:13.64px;font-weight:700;color:#111;letter-spacing:-0.371px;">Всего</div>
<div class="t" style="left:446.0px;top:973.35px;font-size:14px;color:#111;letter-spacing:-0.153px;">Б: 912,40 ₽</div>
<div class="t" style="left:537.8px;top:973.35px;font-size:14px;color:#111;letter-spacing:-0.13px;">Т: 26 319,47 ₽</div>
<div class="r" style="left:1182px;top:968px;width:262px;height:54px;background:#fff;border:2px solid #b4b4b4;border-radius:3px;box-sizing:border-box;"></div>
<svg class="r" style="left:1199px;top:981px;" width="23" height="28" viewBox="0 0 23 28"><rect x="0.8" y="0.8" width="21.4" height="26.4" rx="3" fill="none" stroke="#b4b4b4" stroke-width="1.6"/><rect x="3.5" y="3.5" width="16" height="5" fill="#b4b4b4"/><rect x="3.5" y="11" width="2.8" height="2.6" fill="#b4b4b4"/><rect x="3.5" y="15" width="2.8" height="2.6" fill="#b4b4b4"/><rect x="3.5" y="19" width="2.8" height="2.6" fill="#b4b4b4"/><rect x="3.5" y="23" width="2.8" height="2.6" fill="#b4b4b4"/><rect x="7.7" y="11" width="2.8" height="2.6" fill="#b4b4b4"/><rect x="7.7" y="15" width="2.8" height="2.6" fill="#b4b4b4"/><rect x="7.7" y="19" width="2.8" height="2.6" fill="#b4b4b4"/><rect x="7.7" y="23" width="2.8" height="2.6" fill="#b4b4b4"/><rect x="11.9" y="11" width="2.8" height="2.6" fill="#b4b4b4"/><rect x="11.9" y="15" width="2.8" height="2.6" fill="#b4b4b4"/><rect x="11.9" y="19" width="2.8" height="2.6" fill="#b4b4b4"/><rect x="11.9" y="23" width="2.8" height="2.6" fill="#b4b4b4"/><rect x="16.1" y="11" width="2.8" height="2.6" fill="#b4b4b4"/><rect x="16.1" y="15" width="2.8" height="2.6" fill="#b4b4b4"/><rect x="16.1" y="19" width="2.8" height="2.6" fill="#b4b4b4"/><rect x="16.1" y="23" width="2.8" height="2.6" fill="#b4b4b4"/></svg>
<div class="t" style="left:1237.0px;top:983.60px;font-size:21.74px;color:#b0b0b0;letter-spacing:-0.252px;">Пересчитать смету</div>
<div class="r" style="left:1456px;top:968px;width:287px;height:54px;background:#512da8;border-radius:3px;"></div>
<svg class="r" style="left:1472px;top:978px;" width="36" height="35" viewBox="0 0 36 35"><path d="M1.5 15 L16 2.5 L30.5 15" fill="none" stroke="#fff" stroke-width="1.6"/><path d="M4.5 15.5 L16 6 L27.5 15.5" fill="none" stroke="#fff" stroke-width="1.4"/><path d="M6 15 V30 M26 15 V22 M6 18 H24 M12 12 V30 M18 9 V30" fill="none" stroke="#fff" stroke-width="1.5"/><path d="M18 31 L32 16 L35 19 L21 33 L17.5 34 Z" fill="#fff"/><rect x="3" y="30.5" width="22" height="1.6" fill="#fff"/></svg>
<div class="t" style="left:1514.5px;top:983.38px;font-size:22px;color:#fff;letter-spacing:-0.187px;">Редактировать смету</div>
<div class="r" style="left:0px;top:0px;width:1752px;height:1031px;background:rgba(0,0,0,0.32);"></div>
<div class="r" style="left:0px;top:0px;width:1752px;height:1031px;background:transparent;border:1px solid #787878;box-sizing:border-box;"></div>
<div class="r" style="left:293px;top:184px;width:1200px;height:700px;background:#fff;border-radius:4px 4px 0 0;box-shadow:0 1px 5px rgba(0,0,0,.3);"></div>
<div class="r" style="left:293px;top:184px;width:1200px;height:25px;background:#512da8;border-radius:4px 4px 0 0;"></div>
<div class="t" style="left:304.7px;top:190.00px;font-size:13px;color:#fff;letter-spacing:0.073px;-webkit-text-stroke:0.3px currentColor;">Параметры пересчета</div>
<svg class="r" style="left:1468px;top:190px;" width="15" height="15" viewBox="0 0 15 15"><path d="M1 1 L14 14 M14 1 L1 14" stroke="#fff" stroke-width="1.4"/></svg>
<div class="r" style="left:293px;top:209px;width:1200px;height:628px;background:#e3e3e3;overflow:hidden">
<div class="r" style="left:13px;top:8px;width:579px;height:179px;background:#fff;border-radius:6px;box-shadow:0 2px 7px 1px rgba(0,0,0,.24);"></div>
<div class="t" style="left:33.0px;top:32.14px;font-size:13.78px;font-weight:700;color:#111;letter-spacing:-0.236px;">Наименование копии сметы</div>
<div class="t" style="left:253.2px;top:31.95px;font-size:14px;color:#222;letter-spacing:0.129px;">Подготовительные работы</div>
<div class="r" style="left:253px;top:52px;width:319px;height:1px;background:#6f6f6f;"></div>
<div class="t" style="left:33.0px;top:71.33px;font-size:13.79px;font-weight:700;color:#111;letter-spacing:-0.215px;">Нормативная база</div>
<div class="t" style="left:253.2px;top:71.15px;font-size:14px;color:#9e9e9e;letter-spacing:-0.201px;">ТСН-2001 (МГЭ)</div>
<div class="r" style="left:253px;top:90px;width:319px;height:1px;background:#bdbdbd;"></div>
<svg class="r" style="left:552px;top:75.69999999999999px;" width="10" height="5" viewBox="0 0 10 5"><path d="M0 0 H10 L5 5 Z" fill="#9e9e9e"/></svg>
<div class="t" style="left:33.0px;top:107.99px;font-size:13.71px;font-weight:700;color:#111;letter-spacing:-0.318px;">Дополнение</div>
<div class="t" style="left:253.2px;top:107.75px;font-size:14px;color:#222;letter-spacing:0.047px;">Дополнение 80 от 15.12.2025</div>
<div class="r" style="left:253px;top:127px;width:319px;height:1px;background:#6f6f6f;"></div>
<svg class="r" style="left:552px;top:112.0px;" width="10" height="5" viewBox="0 0 10 5"><path d="M0 0 H10 L5 5 Z" fill="#555"/></svg>
<svg class="r" style="left:33px;top:142px;" width="16" height="16" viewBox="0 0 16 16"><rect x="1" y="1" width="14" height="14" rx="1.5" fill="none" stroke="#512da8" stroke-width="2"/></svg>
<div class="t" style="left:62.8px;top:143.15px;font-size:14px;color:#222;letter-spacing:0.13px;">Применить зимнее удорожание</div>
<div class="r" style="left:13px;top:195px;width:579px;height:311px;background:#fff;border-radius:6px;box-shadow:0 2px 7px 1px rgba(0,0,0,.24);"></div>
<div class="t" style="left:33.0px;top:216.78px;font-size:15.62px;font-weight:700;color:#111;letter-spacing:-0.383px;">Вид работ</div>
<svg class="r" style="left:32.5px;top:247.5px;" width="17" height="17" viewBox="0 0 17 17"><circle cx="8.5" cy="8.5" r="7.3" fill="none" stroke="#512da8" stroke-width="2"/><circle cx="8.5" cy="8.5" r="4" fill="#512da8"/></svg>
<div class="t" style="left:66.7px;top:250.28px;font-size:11.72px;font-weight:700;color:#111;letter-spacing:-0.293px;">Строительство</div>
<div class="r" style="left:26px;top:283px;width:546px;height:1px;background:#dedede;"></div>
<svg class="r" style="left:32.5px;top:290.5px;" width="17" height="17" viewBox="0 0 17 17"><circle cx="8.5" cy="8.5" r="7.3" fill="none" stroke="#666" stroke-width="2"/></svg>
<div class="t" style="left:66.7px;top:293.31px;font-size:11.8px;font-weight:700;color:#111;letter-spacing:-0.202px;">Капитальный ремонт объектов непроизводственного назначения</div>
<svg class="r" style="left:33px;top:321px;" width="16" height="16" viewBox="0 0 16 16"><rect x="1" y="1" width="14" height="14" rx="1.5" fill="none" stroke="#cfcfcf" stroke-width="2"/></svg>
<div class="t" style="left:66.7px;top:318.84px;font-size:12px;color:#222;letter-spacing:0.021px;">Применение коэф. к НР и СП для сборников ТСН-2001.4 при капитальном ремонте</div>
<div class="t" style="left:66.7px;top:330.84px;font-size:12px;color:#222;letter-spacing:0.12px;">объектов находящихся в эксплуатации</div>
<svg class="r" style="left:547.0px;top:322.0px;" width="18" height="18" viewBox="0 0 18 18"><circle cx="9.0" cy="9.0" r="8.2" fill="none" stroke="#512da8" stroke-width="1.2"/><path d="M6.4799999999999995 7.2 Q6.4799999999999995 3.96 9.36 3.96 Q11.88 4.32 11.52 7.2 Q11.16 9.0 9.0 10.799999999999999 V11.88" fill="none" stroke="#512da8" stroke-width="1.3"/><circle cx="9.0" cy="13.68" r="0.9" fill="#512da8"/></svg>
<div class="r" style="left:26px;top:358px;width:546px;height:1px;background:#dedede;"></div>
<svg class="r" style="left:32.5px;top:365.0px;" width="17" height="17" viewBox="0 0 17 17"><circle cx="8.5" cy="8.5" r="7.3" fill="none" stroke="#666" stroke-width="2"/></svg>
<div class="t" style="left:66.7px;top:367.98px;font-size:11.84px;font-weight:700;color:#111;letter-spacing:-0.164px;">Кап.ремонт объектов производственного назначения, сетей инженерно-технического</div>
<div class="t" style="left:66.7px;top:379.98px;font-size:11.84px;font-weight:700;color:#111;letter-spacing:-0.152px;">обеспечения, кап.ремонт дорог и инженерных сооружений (в т.ч. гидротехнических</div>
<div class="t" style="left:66.7px;top:392.24px;font-size:11.77px;font-weight:700;color:#111;letter-spacing:-0.223px;">сооружений, мостов, путепроводов и тому подобное)</div>
<div class="r" style="left:26px;top:419px;width:546px;height:1px;background:#dedede;"></div>
<svg class="r" style="left:32.5px;top:426.5px;" width="17" height="17" viewBox="0 0 17 17"><circle cx="8.5" cy="8.5" r="7.3" fill="none" stroke="#666" stroke-width="2"/></svg>
<div class="t" style="left:66.7px;top:429.04px;font-size:12px;font-weight:700;color:#111;letter-spacing:-0.19px;">Реконструкция</div>
<svg class="r" style="left:33px;top:457px;" width="16" height="16" viewBox="0 0 16 16"><rect x="1" y="1" width="14" height="14" rx="1.5" fill="none" stroke="#cfcfcf" stroke-width="2"/></svg>
<div class="t" style="left:66.7px;top:454.84px;font-size:12px;color:#222;letter-spacing:0.1px;">Строительство в рамках одного титула новых зданий, сооружений, новых участков</div>
<div class="t" style="left:66.7px;top:466.84px;font-size:12px;color:#222;letter-spacing:0.093px;">наружных инженерных сетей по новой или старой трассе</div>
<svg class="r" style="left:547.0px;top:458.0px;" width="18" height="18" viewBox="0 0 18 18"><circle cx="9.0" cy="9.0" r="8.2" fill="none" stroke="#512da8" stroke-width="1.2"/><path d="M6.4799999999999995 7.2 Q6.4799999999999995 3.96 9.36 3.96 Q11.88 4.32 11.52 7.2 Q11.16 9.0 9.0 10.799999999999999 V11.88" fill="none" stroke="#512da8" stroke-width="1.3"/><circle cx="9.0" cy="13.68" r="0.9" fill="#512da8"/></svg>
<div class="r" style="left:13px;top:514px;width:579px;height:300px;background:#fff;border-radius:6px;box-shadow:0 2px 7px 1px rgba(0,0,0,.24);"></div>
<div class="t" style="left:32.6px;top:539.25px;font-size:13.65px;font-weight:700;color:#8f8f8f;letter-spacing:-0.381px;">Основание</div>
<div class="t" style="left:253.6px;top:538.95px;font-size:14px;color:#9e9e9e;letter-spacing:0.22px;">Письмо или приказ</div>
<div class="r" style="left:253px;top:558px;width:319px;height:1px;background:#6f6f6f;"></div>
<div class="r" style="left:33px;top:573px;width:539px;height:80px;background:#fff;border:1px solid #cdbdeb;box-sizing:border-box;"></div>
<div class="r" style="left:34px;top:600px;width:160px;height:60px;background:#ece8fb;"></div>
<div class="r" style="left:33px;top:600px;width:539px;height:1px;background:#cdbdeb;"></div>
<div class="r" style="left:33px;top:621px;width:539px;height:1px;background:#cdbdeb;"></div>
<div class="r" style="left:194px;top:573px;width:1px;height:80px;background:#cdbdeb;"></div>
<div class="r" style="left:382px;top:573px;width:1px;height:80px;background:#cdbdeb;"></div>
<div class="t" style="left:249.5px;top:578.75px;font-size:14px;color:#8f8f8f;letter-spacing:0.226px;">Материалы</div>
<div class="t" style="left:429.5px;top:578.75px;font-size:14px;color:#8f8f8f;letter-spacing:-0.102px;">Оборудование</div>
<div class="t" style="left:110.0px;top:603.97px;font-size:13.62px;font-weight:700;color:#8f8f8f;letter-spacing:-0.443px;">Инфляторы</div>
<div class="t" style="left:275.5px;top:604.50px;font-size:13px;color:#8f8f8f;letter-spacing:-0.078px;">0,00</div>
<div class="t" style="left:464.0px;top:604.50px;font-size:13px;color:#8f8f8f;letter-spacing:-0.078px;">0,00</div>
<div class="t" style="left:109.0px;top:624.39px;font-size:13.72px;font-weight:700;color:#8f8f8f;letter-spacing:-0.332px;">Дефляторы</div>
<div class="r" style="left:602px;top:8px;width:579px;height:116px;background:#fff;border-radius:6px;box-shadow:0 2px 7px 1px rgba(0,0,0,.24);"></div>
<div class="r" style="left:599px;top:7px;width:582px;height:118px;background:transparent;border:3px solid #ff0000;box-sizing:border-box;"></div>
<svg class="r" style="left:622px;top:28px;" width="16" height="16" viewBox="0 0 16 16"><rect x="0" y="0" width="16" height="16" rx="2" fill="#512da8"/><path d="M2.8 8.5 L6.2 11.6 L13.3 4.3" fill="none" stroke="#fff" stroke-width="1.25"/></svg>
<div class="t" style="left:651.7px;top:29.04px;font-size:12px;color:#222;letter-spacing:0.129px;">Замена наименований нормативов</div>
<svg class="r" style="left:622px;top:52.5px;" width="16" height="16" viewBox="0 0 16 16"><rect x="0" y="0" width="16" height="16" rx="2" fill="#512da8"/><path d="M2.8 8.5 L6.2 11.6 L13.3 4.3" fill="none" stroke="#fff" stroke-width="1.25"/></svg>
<div class="t" style="left:651.7px;top:53.54px;font-size:12px;color:#222;letter-spacing:0.111px;">Обнуление цены ненайденных нормативов (кроме прайсовых позиций)</div>
<svg class="r" style="left:622px;top:78px;" width="16" height="16" viewBox="0 0 16 16"><rect x="1" y="1" width="14" height="14" rx="1.5" fill="none" stroke="#512da8" stroke-width="2"/></svg>
<div class="t" style="left:651.7px;top:78.84px;font-size:12px;color:#222;letter-spacing:0.1px;">Сохранить введенные вручную индексы пересчета</div>
<div class="r" style="left:602px;top:131px;width:579px;height:130px;background:#fff;border-radius:6px;box-shadow:0 2px 7px 1px rgba(0,0,0,.24);"></div>
<div class="t" style="left:621.5px;top:152.87px;font-size:15.75px;font-weight:700;color:#111;letter-spacing:-0.26px;">Коэффициенты (индексы) пересчета</div>
<div class="t" style="left:621.5px;top:184.71px;font-size:13.69px;font-weight:700;color:#8f8f8f;letter-spacing:-0.321px;">Год</div>
<div class="t" style="left:842.0px;top:184.45px;font-size:14px;color:#9e9e9e;letter-spacing:0.064px;">Выберите из списка</div>
<div class="r" style="left:842px;top:203px;width:319px;height:1px;background:#bdbdbd;"></div>
<svg class="r" style="left:1141px;top:188.8px;" width="10" height="5" viewBox="0 0 10 5"><path d="M0 0 H10 L5 5 Z" fill="#8a8a8a"/></svg>
<div class="t" style="left:621.5px;top:221.34px;font-size:13.77px;font-weight:700;color:#8f8f8f;letter-spacing:-0.248px;">Период выпуска</div>
<div class="t" style="left:842.0px;top:221.15px;font-size:14px;color:#b4b4b4;letter-spacing:0.064px;">Выберите из списка</div>
<div class="r" style="left:842px;top:240px;width:319px;height:1px;background:#bdbdbd;"></div>
<svg class="r" style="left:1141px;top:225.8px;" width="10" height="5" viewBox="0 0 10 5"><path d="M0 0 H10 L5 5 Z" fill="#8a8a8a"/></svg>
<div class="r" style="left:602px;top:269px;width:579px;height:168px;background:#fff;border-radius:6px;box-shadow:0 2px 7px 1px rgba(0,0,0,.24);"></div>
<div class="t" style="left:621.8px;top:290.96px;font-size:16px;font-weight:700;color:#111;letter-spacing:0.05px;">ТСН-2001.13</div>
<div class="t" style="left:621.8px;top:322.04px;font-size:13.78px;font-weight:700;color:#8f8f8f;letter-spacing:-0.227px;">Нормативная база</div>
<svg class="r" style="left:753.75px;top:321.75px;" width="14.5" height="14.5" viewBox="0 0 14.5 14.5"><circle cx="7.25" cy="7.25" r="6.45" fill="none" stroke="#512da8" stroke-width="1.2"/><path d="M5.22 5.800000000000001 Q5.22 3.19 7.54 3.19 Q9.57 3.48 9.28 5.800000000000001 Q8.99 7.25 7.25 8.7 V9.57" fill="none" stroke="#512da8" stroke-width="1.3"/><circle cx="7.25" cy="11.02" r="0.9" fill="#512da8"/></svg>
<div class="t" style="left:842.0px;top:321.85px;font-size:14px;color:#b4b4b4;letter-spacing:0.064px;">Выберите из списка</div>
<div class="r" style="left:842px;top:341px;width:319px;height:1px;background:#bdbdbd;"></div>
<svg class="r" style="left:1141px;top:326.5px;" width="10" height="5" viewBox="0 0 10 5"><path d="M0 0 H10 L5 5 Z" fill="#8a8a8a"/></svg>
<div class="t" style="left:621.8px;top:359.71px;font-size:13.69px;font-weight:700;color:#8f8f8f;letter-spacing:-0.321px;">Год</div>
<div class="t" style="left:842.0px;top:359.45px;font-size:14px;color:#b4b4b4;letter-spacing:0.064px;">Выберите из списка</div>
<div class="r" style="left:842px;top:378px;width:319px;height:1px;background:#bdbdbd;"></div>
<svg class="r" style="left:1141px;top:364.0px;" width="10" height="5" viewBox="0 0 10 5"><path d="M0 0 H10 L5 5 Z" fill="#8a8a8a"/></svg>
<div class="t" style="left:621.8px;top:397.14px;font-size:13.77px;font-weight:700;color:#8f8f8f;letter-spacing:-0.248px;">Период выпуска</div>
<div class="t" style="left:842.0px;top:396.95px;font-size:14px;color:#b4b4b4;letter-spacing:0.064px;">Выберите из списка</div>
<div class="r" style="left:842px;top:415.5px;width:319px;height:1px;background:#bdbdbd;"></div>
<svg class="r" style="left:1141px;top:401.5px;" width="10" height="5" viewBox="0 0 10 5"><path d="M0 0 H10 L5 5 Z" fill="#8a8a8a"/></svg>
<div class="r" style="left:602px;top:445px;width:579px;height:300px;background:#fff;border-radius:6px;box-shadow:0 2px 7px 1px rgba(0,0,0,.24);"></div>
<div class="t" style="left:621.8px;top:466.54px;font-size:15.78px;font-weight:700;color:#111;letter-spacing:-0.208px;">Применение НР и СП для сборников 3.27, 3.29 и 4.10</div>
<svg class="r" style="left:621.2px;top:497.79999999999995px;" width="17" height="17" viewBox="0 0 17 17"><circle cx="8.5" cy="8.5" r="7.3" fill="none" stroke="#512da8" stroke-width="2"/><circle cx="8.5" cy="8.5" r="4" fill="#512da8"/></svg>
<div class="t" style="left:655.9px;top:500.44px;font-size:12px;color:#222;letter-spacing:0.156px;">Автомобильные дороги</div>
<svg class="r" style="left:799.55px;top:499.04999999999995px;" width="14.5" height="14.5" viewBox="0 0 14.5 14.5"><circle cx="7.25" cy="7.25" r="6.45" fill="none" stroke="#512da8" stroke-width="1.2"/><path d="M5.22 5.800000000000001 Q5.22 3.19 7.54 3.19 Q9.57 3.48 9.28 5.800000000000001 Q8.99 7.25 7.25 8.7 V9.57" fill="none" stroke="#512da8" stroke-width="1.3"/><circle cx="7.25" cy="11.02" r="0.9" fill="#512da8"/></svg>
<svg class="r" style="left:621.2px;top:522.5px;" width="17" height="17" viewBox="0 0 17 17"><circle cx="8.5" cy="8.5" r="7.3" fill="none" stroke="#666" stroke-width="2"/></svg>
<div class="t" style="left:655.9px;top:525.04px;font-size:12px;color:#222;letter-spacing:0.143px;">Устройство покрытий дорожек, тротуаров, мостовых и площадок и прочее</div>
<div class="r" style="left:621.8px;top:549px;width:539px;height:1px;background:#dedede;"></div>
<div class="t" style="left:621.8px;top:555.66px;font-size:11.74px;font-weight:700;color:#111;letter-spacing:-0.267px;">Тоннели и метрополитены:</div>
<svg class="r" style="left:621.2px;top:572.7px;" width="17" height="17" viewBox="0 0 17 17"><circle cx="8.5" cy="8.5" r="7.3" fill="none" stroke="#512da8" stroke-width="2"/><circle cx="8.5" cy="8.5" r="4" fill="#512da8"/></svg>
<div class="t" style="left:655.9px;top:575.24px;font-size:12px;color:#222;letter-spacing:0.121px;">Закрытый способ работ</div>
<svg class="r" style="left:801.75px;top:573.75px;" width="14.5" height="14.5" viewBox="0 0 14.5 14.5"><circle cx="7.25" cy="7.25" r="6.45" fill="none" stroke="#512da8" stroke-width="1.2"/><path d="M5.22 5.800000000000001 Q5.22 3.19 7.54 3.19 Q9.57 3.48 9.28 5.800000000000001 Q8.99 7.25 7.25 8.7 V9.57" fill="none" stroke="#512da8" stroke-width="1.3"/><circle cx="7.25" cy="11.02" r="0.9" fill="#512da8"/></svg>
<svg class="r" style="left:621.2px;top:597.8px;" width="17" height="17" viewBox="0 0 17 17"><circle cx="8.5" cy="8.5" r="7.3" fill="none" stroke="#666" stroke-width="2"/></svg>
<div class="t" style="left:655.9px;top:600.44px;font-size:12px;color:#222;letter-spacing:0.107px;">Открытый способ работ</div>
<div class="r" style="left:621.8px;top:624px;width:539px;height:1px;background:#dedede;"></div>
<div class="r" style="left:1194px;top:0px;width:6px;height:628px;background:#ebebeb;"></div>
<div class="r" style="left:1194px;top:0px;width:6px;height:522px;background:#9d8bc7;border-radius:3px;"></div>
</div>
<div class="r" style="left:293px;top:837px;width:1200px;height:1px;background:#d9d9d9;"></div>
<div class="r" style="left:1212px;top:846px;width:121px;height:30px;background:#e0e0e0;border-radius:4px;"></div>
<div class="t" style="left:1228.0px;top:855.50px;font-size:12.76px;color:#a6a6a6;letter-spacing:-0.291px;">ПЕРЕСЧИТАТЬ</div>
<div class="t" style="left:1366.1px;top:855.53px;font-size:12.72px;color:#5a36b0;letter-spacing:-0.359px;">ОТМЕНИТЬ</div>
</body></html>
